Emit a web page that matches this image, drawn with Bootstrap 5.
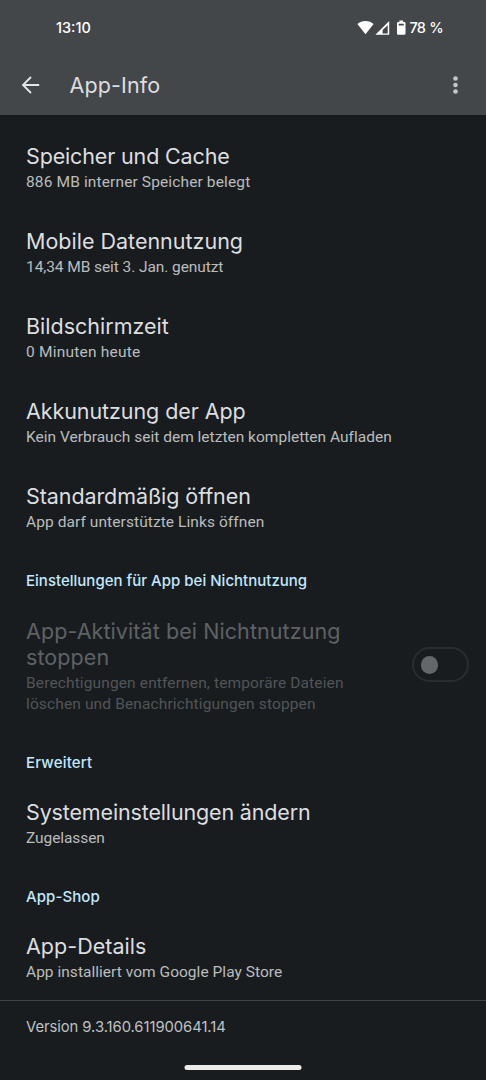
<!DOCTYPE html>
<html lang="de" data-bs-theme="dark">
<head>
<meta charset="utf-8">
<meta name="viewport" content="width=device-width, initial-scale=1">
<title>App-Info</title>
<link href="https://cdn.jsdelivr.net/npm/bootstrap@5.3.0/dist/css/bootstrap.min.css" rel="stylesheet">
<style>
body{background:#191c1e;color:#e1e3e5;font-family:Inter,Roboto,sans-serif;font-size:15px;height:1080px;overflow:hidden}
.app-header{background:#44474a;height:115px}
.status-bar{height:55px;padding:0 43px 0 56px;color:#fff;font-size:14.5px;font-weight:500}
.status-pct{letter-spacing:-.75px;word-spacing:1px;margin-left:3px}
.title-bar{height:59px;padding:0 24px 0 20px}
.page-title{font-size:21.5px;line-height:26px;font-weight:400;color:#dcdee0;letter-spacing:.14px;margin-left:27.5px}
.settings{padding-top:10px}
.pref{padding:18.1px 17px 17px 26px}
.pref-title{font-size:21.5px;line-height:26px;font-weight:400;color:#dcdee0;margin:0;white-space:nowrap}
.pref-sub{font-family:Roboto,sans-serif;font-size:15.5px;line-height:21.5px;color:#b9bcbe;margin:0;padding-top:2.5px;white-space:nowrap}
.pref-cat{font-size:15px;line-height:22px;font-weight:500;color:#c2e8ff;margin:0;padding:19.5px 26px 7.5px}
.is-off{padding-top:18.6px;padding-bottom:16.6px}
.is-off .pref-title{color:#5e6265}
.is-off .pref-sub{color:#515558}
.toggle{width:57px;height:35px;border:2.5px solid #2a2d2f;padding-left:6.5px;position:relative;top:-2px}
.toggle-knob{flex:none;width:17.5px;height:17.5px;background:#63676a}
.version{border-top:1px solid #3f4345;padding:16px 26px 0}
.version-text{font-size:14.8px;line-height:21.5px;color:#bfc2c4;margin:0;letter-spacing:-.06px}
.home-bar{width:117px;height:4.5px;background:#eeecea;margin-top:26.5px;transform:translateX(-.5px)}
.ls-a{letter-spacing:-.15px}.ls-b{letter-spacing:-.08px}.ls-c{letter-spacing:.01px}
.ls-d{letter-spacing:.03px}.ls-e{letter-spacing:.08px}.ls-f{letter-spacing:.13px}
.ls-g{letter-spacing:.18px}.ls-h{letter-spacing:.22px}
</style>
</head>
<body>
<header class="app-header">
  <div class="status-bar d-flex align-items-center justify-content-between">
    <span>13:10</span>
    <div class="d-flex align-items-center">
      <svg width="51" height="16" viewBox="0 0 51 16" fill="#fff" aria-hidden="true">
        <g transform="translate(1)">
        <path d="M.4 3.9C2.6 2.1 5.4 1 8.500 1s5.900 1.100 8.100 2.900L8.500 14.200z"/>
        <path fill-rule="evenodd" d="M32.200 1v13.800H18.400zM30.700 5.200L25.600 10.100v3.300h5.100z"/>
        <path fill-rule="evenodd" d="M42.400.6h3.700v1.500h1.200q1.200 0 1.200 1.200v10.300q0 1.200-1.200 1.200h-6.100q-1.200 0-1.200-1.200V3.300q0-1.200 1.200-1.200h1.200zM41.700 3.700v1.700h5.100V3.700z"/>
        </g>
      </svg>
      <span class="status-pct">78 %</span>
    </div>
  </div>
  <div class="title-bar d-flex align-items-center">
    <svg width="22" height="20" viewBox="0 0 22 20" fill="none" stroke="#e4e6e8" stroke-width="1.8" aria-label="Zurück"><path d="M19.200 10H3M11 2L3 10l8 8"/></svg>
    <h1 class="page-title mb-0">App-Info</h1>
    <svg class="ms-auto" width="13" height="20" viewBox="0 0 13 20" fill="#c5c7ca" aria-label="Mehr"><circle cx="6.500" cy="3.500" r="2.300"/><circle cx="6.500" cy="10" r="2.300"/><circle cx="6.500" cy="16.500" r="2.300"/></svg>
  </div>
</header>
<main class="settings">
  <section class="pref"><h2 class="pref-title ls-a">Speicher und Cache</h2><p class="pref-sub ls-f">886 MB interner Speicher belegt</p></section>
  <section class="pref"><h2 class="pref-title">Mobile Datennutzung</h2><p class="pref-sub ls-b">14,34 MB seit 3. Jan. genutzt</p></section>
  <section class="pref"><h2 class="pref-title">Bildschirmzeit</h2><p class="pref-sub ls-h">0 Minuten heute</p></section>
  <section class="pref"><h2 class="pref-title ls-b">Akkunutzung der App</h2><p class="pref-sub ls-c">Kein Verbrauch seit dem letzten kompletten Aufladen</p></section>
  <section class="pref"><h2 class="pref-title ls-b">Standardmäßig öffnen</h2><p class="pref-sub ls-e">App darf unterstützte Links öffnen</p></section>
  <h3 class="pref-cat ls-c">Einstellungen für App bei Nichtnutzung</h3>
  <section class="pref is-off d-flex align-items-center justify-content-between">
    <div>
      <h2 class="pref-title ls-e">App-Aktivität bei Nichtnutzung<br>stoppen</h2>
      <p class="pref-sub ls-f">Berechtigungen entfernen, temporäre Dateien<br>löschen und Benachrichtigungen stoppen</p>
    </div>
    <div class="toggle rounded-pill d-flex align-items-center" role="switch" aria-checked="false" aria-disabled="true"><span class="toggle-knob rounded-circle"></span></div>
  </section>
  <h3 class="pref-cat ls-g">Erweitert</h3>
  <section class="pref"><h2 class="pref-title ls-a">Systemeinstellungen ändern</h2><p class="pref-sub ls-b">Zugelassen</p></section>
  <h3 class="pref-cat ls-e">App-Shop</h3>
  <section class="pref"><h2 class="pref-title ls-d">App-Details</h2><p class="pref-sub ls-d">App installiert vom Google Play Store</p></section>
</main>
<footer class="version">
  <p class="version-text">Version 9.3.160.611900641.14</p>
  <div class="home-bar rounded-pill mx-auto"></div>
</footer>
<script src="https://cdn.jsdelivr.net/npm/bootstrap@5.3.0/dist/js/bootstrap.bundle.min.js"></script>
</body>
</html>
